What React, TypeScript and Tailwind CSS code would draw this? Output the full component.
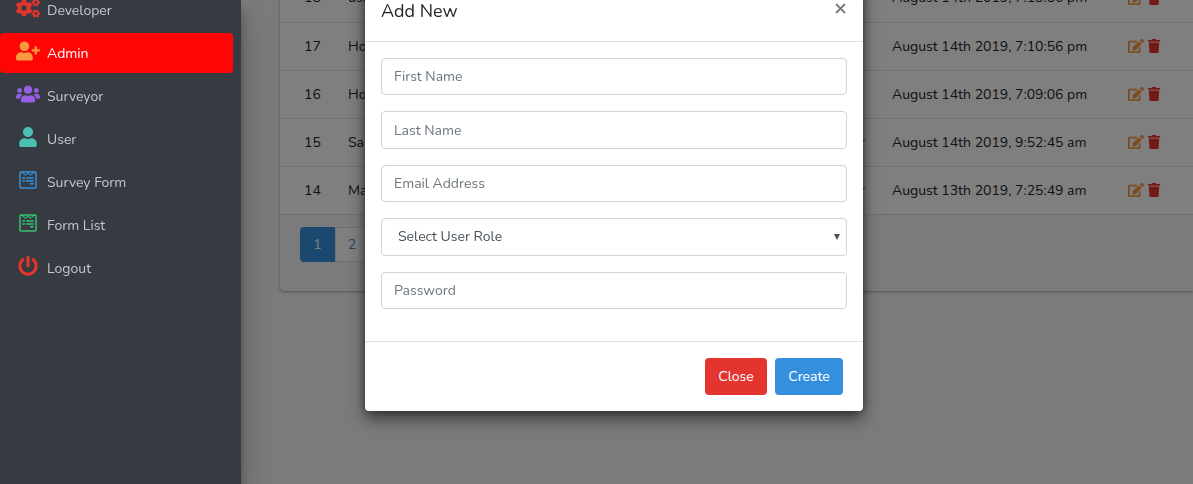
import React from "react";
import {
  FaCogs,
  FaEdit,
  FaPowerOff,
  FaTrash,
  FaUser,
  FaUserPlus,
  FaUsers,
  FaWpforms,
} from "react-icons/fa";
import type { IconType } from "react-icons";

type NavItem = { label: string; icon: IconType; color: string; size: number; active?: boolean };

const navItems: NavItem[] = [
  { label: "Developer", icon: FaCogs, color: "text-[#e3342f]", size: 24 },
  { label: "Admin", icon: FaUserPlus, color: "text-[#f6993f]", size: 24, active: true },
  { label: "Surveyor", icon: FaUsers, color: "text-[#9561e2]", size: 24 },
  { label: "User", icon: FaUser, color: "text-[#4dc0b5]", size: 20 },
  { label: "Survey Form", icon: FaWpforms, color: "text-[#3490dc]", size: 20 },
  { label: "Form List", icon: FaWpforms, color: "text-[#38c172]", size: 20 },
  { label: "Logout", icon: FaPowerOff, color: "text-[#e3342f]", size: 20 },
];

const rows = [
  { id: 18, name: "use", type: "", date: "August 14th 2019, 7:13:56 pm" },
  { id: 17, name: "Ho", type: "", date: "August 14th 2019, 7:10:56 pm" },
  { id: 16, name: "Ho", type: "", date: "August 14th 2019, 7:09:06 pm" },
  { id: 15, name: "Sa", type: "Surveyor", date: "August 14th 2019, 9:52:45 am" },
  { id: 14, name: "Ma", type: "Surveyor", date: "August 13th 2019, 7:25:49 am" },
];

function Sidebar() {
  return (
    <aside className="relative z-20 w-[241px] shrink-0 bg-[#363a41] pr-2 shadow-[0_14px_28px_rgba(0,0,0,0.25),0_10px_10px_rgba(0,0,0,0.22)]">
      <nav className="-mt-[10px] flex flex-col gap-[3px]">
        {navItems.map(({ label, icon: Icon, color, size, active }) => (
          <a
            key={label}
            href="#"
            className={`flex h-[40px] items-center gap-[7px] rounded pl-4 ${
              active ? "bg-[#ff0505] text-white" : "text-[#c2c7d0]"
            }`}
          >
            <span className={`flex w-6 justify-center pb-1 ${color}`}>
              <Icon size={size} />
            </span>
            {label}
          </a>
        ))}
      </nav>
    </aside>
  );
}

function AdminTable() {
  return (
    <section className="-mt-[26px] rounded-l bg-white shadow-[0_0_1px_rgba(0,0,0,0.25),0_1px_3px_rgba(0,0,0,0.3)]">
      <table className="w-full table-fixed border-collapse">
        <colgroup>
          <col className="w-[56px]" />
          <col />
          <col className="w-[120px]" />
          <col className="w-[236px]" />
          <col className="w-[77px]" />
        </colgroup>
        <tbody>
          {rows.map((row) => (
            <tr key={row.id} className="h-[48px] border-b border-[#dee2e6]">
              <td className="pl-6">{row.id}</td>
              <td className="px-3">{row.name}</td>
              <td className="pr-[15px] text-right">{row.type}</td>
              <td className="px-3 whitespace-nowrap">{row.date}</td>
              <td className="pl-3">
                <div className="flex items-center gap-[3px]">
                  <button type="button" aria-label="Edit" className="text-[#f6993f]">
                    <FaEdit size={16} />
                  </button>
                  <button type="button" aria-label="Delete" className="text-[#e3342f]">
                    <FaTrash size={14} />
                  </button>
                </div>
              </td>
            </tr>
          ))}
        </tbody>
      </table>
      <div className="rounded-bl bg-black/3 px-5 pt-3 pb-[29px]">
        <div className="flex">
          <a
            href="#"
            className="flex h-[35px] w-[35px] items-center justify-center rounded-l bg-[#3490dc] text-white"
          >
            1
          </a>
          <a
            href="#"
            className="flex h-[35px] w-[34px] items-center justify-center rounded-r border border-[#dee2e6] bg-white text-[#3490dc]"
          >
            2
          </a>
        </div>
      </div>
    </section>
  );
}

const fieldClass =
  "w-full rounded border border-[#ced4da] bg-white px-3 text-[#495057] placeholder:text-[#6c757d] outline-none";

function AddNewDialog() {
  return (
    <div className="fixed inset-0 z-30 flex items-start justify-center overflow-hidden">
      <div
        role="dialog"
        aria-labelledby="dialog-title"
        className="-mt-5 ml-[35px] w-[498px] rounded bg-white shadow-[0_8px_16px_rgba(0,0,0,0.5),0_0_8px_rgba(0,0,0,0.4)]"
      >
        <header className="flex h-[62px] items-center justify-between border-b border-[#dee2e6] px-4">
          <h5 id="dialog-title" className="pt-0.5 text-[18px] text-[#212529]">
            Add New
          </h5>
          <button type="button" aria-label="Close dialog" className="pb-1 text-[#7f7f7f]">
            <svg width="13" height="14" viewBox="0 0 13 14" stroke="currentColor" strokeWidth="2">
              <path d="M2 2 11 11M11 2 2 11" />
            </svg>
          </button>
        </header>
        <form>
          <div className="grid h-[299px] auto-rows-fr gap-4 px-4 pt-4 pb-8">
            <input aria-label="First Name" placeholder="First Name" className={fieldClass} />
            <input aria-label="Last Name" placeholder="Last Name" className={fieldClass} />
            <input
              type="email"
              aria-label="Email Address"
              placeholder="Email Address"
              className={fieldClass}
            />
            <div className="relative grid">
              <select
                aria-label="User Role"
                className="w-full appearance-none rounded border border-[#ced4da] bg-white px-4 text-[#495057] outline-none"
              >
                <option>Select User Role</option>
              </select>
              <svg
                className="pointer-events-none absolute top-1/2 right-[7px] -translate-y-1/2"
                width="6"
                height="6"
                viewBox="0 0 6 6"
                fill="#495057"
              >
                <path d="M0 0H6L3 6Z" />
              </svg>
            </div>
            <input
              type="password"
              aria-label="Password"
              placeholder="Password"
              className={fieldClass}
            />
          </div>
          <footer className="flex justify-end gap-2 border-t border-[#dee2e6] py-4 pr-5">
            <button type="button" className="h-[37px] w-[62px] rounded bg-[#e3342f] text-white">
              Close
            </button>
            <button type="button" className="h-[37px] w-[68px] rounded bg-[#3490dc] text-white">
              Create
            </button>
          </footer>
        </form>
      </div>
    </div>
  );
}

export default function App() {
  return (
    <div className="flex h-screen overflow-hidden bg-[#f4f6f9] font-['Nunito','Lato',sans-serif] text-[14px] text-[#212529]">
      <Sidebar />
      <main className="min-w-0 flex-1 pl-[39px]">
        <AdminTable />
      </main>
      <div className="fixed inset-0 z-10 bg-black/50" />
      <AddNewDialog />
    </div>
  );
}
